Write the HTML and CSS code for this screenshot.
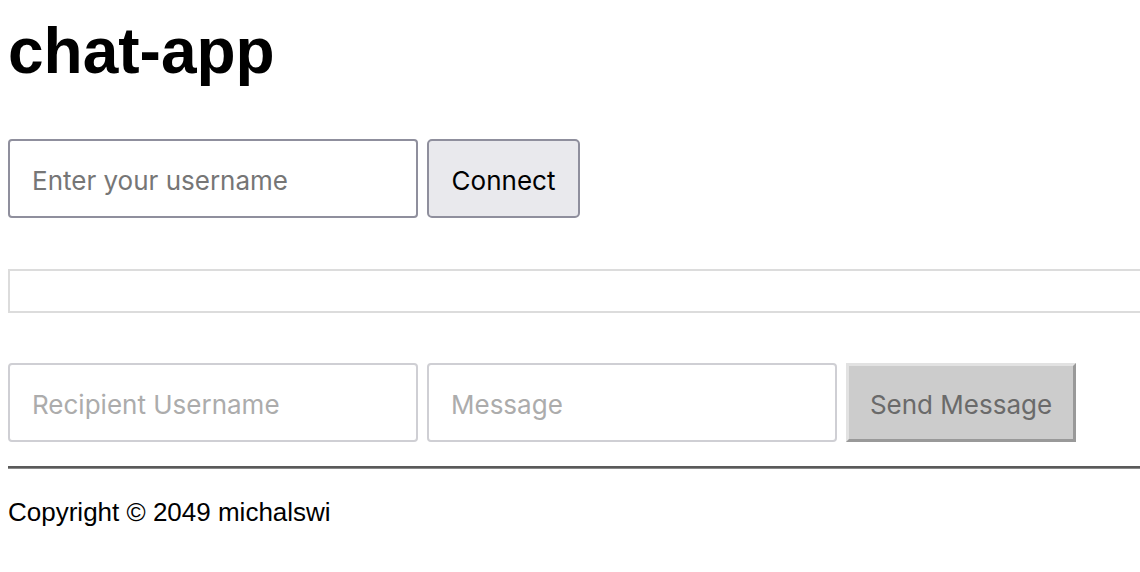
FILE: index.html
```html
<!DOCTYPE html>
<html>
<head>
<meta charset="utf-8">
<title>chat-app</title>
<link rel="stylesheet" href="styles.css">
</head>
<body>
<h1 class="title">chat-app</h1>
<div class="row connect-row">
  <input class="field field-user" type="text" placeholder="Enter your username">
  <button class="btn btn-connect">Connect</button>
</div>
<div class="messages"></div>
<div class="row send-row">
  <input class="field field-light" type="text" placeholder="Recipient Username" disabled>
  <input class="field field-light" type="text" placeholder="Message" disabled>
  <button class="btn btn-send" disabled>Send Message</button>
</div>
<hr class="divider">
<footer class="footer">Copyright © 2049 michalswi</footer>
</body>
</html>
```

FILE: styles.css
```css
html, body {
  overflow-x: hidden;
}
body {
  margin: 0;
  padding: 14px 8px 0 8px;
  background: #fff;
  font-family: "Liberation Sans", Arial, sans-serif;
  color: #000;
}
.title {
  margin: 0;
  font-size: 64px;
  font-weight: bold;
  line-height: 74px;
}
.row {
  display: flex;
  gap: 9px;
  align-items: stretch;
}
.connect-row {
  margin-top: 51px;
}
.field {
  box-sizing: border-box;
  width: 410px;
  height: 79px;
  margin: 0;
  padding: 3px 22px 0 22px;
  border: 2px solid #8f8f9d;
  border-radius: 4px;
  font-family: Inter, "Noto Sans", sans-serif;
  font-size: 26px;
  color: #000;
  background: #fff;
  outline: none;
}
.field::placeholder {
  color: #767676;
}
.field-light {
  border-color: #cfcfd4;
}
.field-light::placeholder {
  color: #acacac;
}
.btn {
  box-sizing: border-box;
  height: 79px;
  margin: 0;
  padding: 3px 0 0 0;
  font-family: Inter, "Noto Sans", sans-serif;
  font-size: 26px;
}
.btn-connect {
  width: 153px;
  background: #e9e9ed;
  border: 2px solid #8f8f9d;
  border-radius: 5px;
  color: #000;
}
.btn-send {
  width: 230px;
  background: #cccccc;
  border: 3px solid;
  border-color: #e2e2e2 #999999 #999999 #e2e2e2;
  border-radius: 0;
  color: #6a6a6a;
}
.messages {
  box-sizing: border-box;
  margin-top: 51px;
  margin-right: -20px;
  height: 44px;
  border: 2px solid #dcdcdc;
}
.send-row {
  margin-top: 50px;
}
.divider {
  margin: 24px -8px 0 0;
  height: 0;
  border: none;
  border-top: 2px solid #5a5a5a;
  border-bottom: 1px solid #8a8a8a;
}
.footer {
  margin-top: 28px;
  font-size: 26px;
  line-height: 30px;
}
```
